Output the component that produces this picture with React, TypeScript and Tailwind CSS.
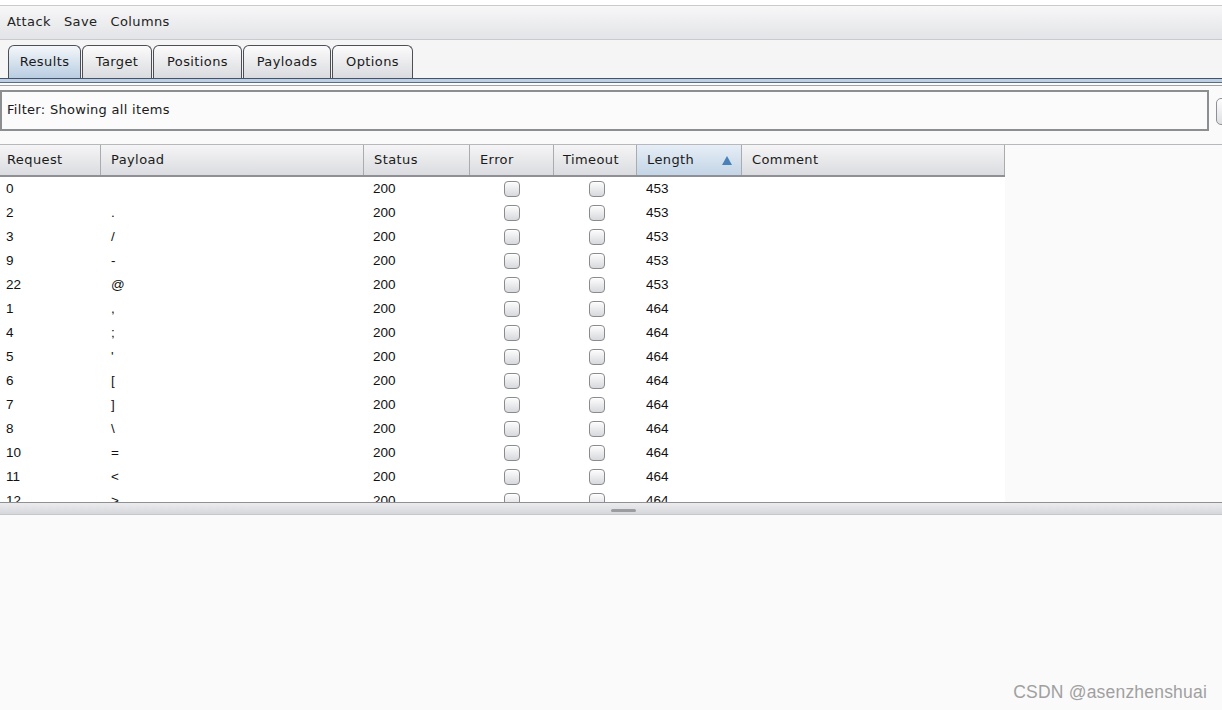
import React from 'react';

const cols = [
  { label: 'Request', w: 101, pad: 'pl-[7px]' },
  { label: 'Payload', w: 263, pad: 'pl-[10px]' },
  { label: 'Status', w: 106, pad: 'pl-[10px]' },
  { label: 'Error', w: 84, pad: 'pl-[10px]' },
  { label: 'Timeout', w: 83, pad: 'pl-[9px]' },
  { label: 'Length', w: 105, pad: 'pl-[10px]' },
  { label: 'Comment', w: 263, pad: 'pl-[10px]' },
];

const rows: [string, string, string][] = [
  ['0', '', '453'],
  ['2', '.', '453'],
  ['3', '/', '453'],
  ['9', '-', '453'],
  ['22', '@', '453'],
  ['1', ',', '464'],
  ['4', ';', '464'],
  ['5', "'", '464'],
  ['6', '[', '464'],
  ['7', ']', '464'],
  ['8', '\\', '464'],
  ['10', '=', '464'],
  ['11', '<', '464'],
  ['12', '>', '464'],
];

const tabs = ['Results', 'Target', 'Positions', 'Payloads', 'Options'];
const tabWidths = ['w-[73px]', 'w-[70px]', 'w-[89px]', 'w-[88px]', 'w-[81px]'];

function Check() {
  return (
    <div className="w-[16px] h-[16px] rounded-[4px] border border-[#8a8b8e] bg-gradient-to-b from-[#fdfdfd] to-[#d8d9dd] shadow-[inset_0_1px_0_#fff]" />
  );
}

export default function App() {
  return (
    <div className="relative h-[710px] w-full overflow-hidden bg-[#fafafa] flex flex-col text-[13px] text-[#111] font-['DejaVu_Sans',sans-serif]">
      {/* top strip */}
      <div className="h-[5px] bg-white" />

      {/* Menu bar */}
      <div className="h-[35px] border-y border-[#c9cacd] bg-gradient-to-b from-[#f7f7f8] to-[#e3e4e7] flex items-center gap-[13px] pl-[7px] pb-[2px] tracking-[0.4px] text-[#222]">
        <span>Attack</span>
        <span>Save</span>
        <span>Columns</span>
      </div>

      {/* Tabs */}
      <div className="h-[38px] flex items-end pl-[8px] gap-[1px] bg-[#f5f5f5]">
        {tabs.map((t, i) => (
          <div
            key={t}
            className={`${tabWidths[i]} h-[33px] rounded-t-[6px] border border-b-0 border-[#4c4f55] flex items-center justify-center tracking-[0.4px] ${
              i === 0
                ? 'bg-gradient-to-b from-[#f4f7fa] to-[#b9cde1] text-[#1a1a1a]'
                : 'bg-gradient-to-b from-[#fbfbfb] to-[#dadbdf] text-[#1a1a1a]'
            }`}
          >
            {t}
          </div>
        ))}
      </div>
      <div className="h-px bg-[#44536a]" />
      <div className="h-[3px] bg-[#bccfe3]" />
      <div className="h-px bg-[#5b6b80]" />
      <div className="h-[2px]" />
      <div className="h-px bg-[#a2a3a6]" />

      {/* Filter */}
      <div className="flex items-start gap-[7px] pt-[4px] overflow-hidden">
        <div className="w-[1209px] shrink-0 h-[41px] border-2 border-[#8d8e90] bg-[#fbfbfb] flex items-center pl-[5px] pb-[2px] tracking-[0.3px] text-[#1a1a1a]">
          Filter: Showing all items
        </div>
        <div className="mt-[8px] w-[20px] h-[27px] rounded-[5px] border border-[#8e9095] bg-gradient-to-b from-[#fdfdfd] to-[#dfe0e3] shrink-0" />
      </div>

      <div className="h-[13px]" />
      <div className="h-px bg-[#b7b8bb]" />

      {/* Table */}
      <div className="w-[1005px] flex flex-col">
        <div className="h-[32px] flex border-b-2 border-[#8e9095]">
          {cols.map((c, i) => (
            <div
              key={c.label}
              style={{ width: c.w }}
              className={`${c.pad} h-full flex items-center justify-between pr-[8px] border-r border-[#a9abaf] tracking-[0.4px] text-[#1a1a1a] ${
                i === 5
                  ? 'bg-gradient-to-b from-[#e6eef6] to-[#c3d5e6]'
                  : 'bg-gradient-to-b from-[#f5f5f6] to-[#dbdce0]'
              }`}
            >
              <span>{c.label}</span>
              {i === 5 && (
                <svg width="10" height="9" viewBox="0 0 10 9" className="mr-[1px]">
                  <path d="M5 0 L10 9 L0 9 Z" fill="#4a80b8" />
                </svg>
              )}
            </div>
          ))}
        </div>

        <div className="h-[325px] overflow-hidden bg-white font-['Liberation_Sans',Arial,sans-serif] text-[13.5px] text-[#111]">
          {rows.map(([req, payload, len]) => (
            <div key={req} className="h-[24px] flex items-center">
              <div className="w-[101px] pl-[6px]">{req}</div>
              <div className="w-[263px] pl-[10px]">{payload}</div>
              <div className="w-[106px] pl-[9px]">200</div>
              <div className="w-[84px] flex justify-center">
                <Check />
              </div>
              <div className="w-[83px] flex justify-center pl-[3px]">
                <Check />
              </div>
              <div className="w-[105px] pl-[9px]">{len}</div>
              <div className="w-[263px]" />
            </div>
          ))}
        </div>
      </div>

      {/* Split divider */}
      <div className="h-px bg-[#8e9095]" />
      <div className="h-[11px] bg-gradient-to-b from-[#ececee] to-[#d6d7db] flex items-end justify-center pb-[2px]">
        <div className="ml-[24px] w-[25px] h-[3px] rounded-[2px] bg-[#9a9ca1]" />
      </div>
      <div className="h-px bg-[#c6c7ca]" />
      <div className="flex-1 bg-[#fafafa]" />

      {/* Watermark */}
      <div className="absolute right-[15px] bottom-[5px] text-[17.5px] tracking-[0.2px] text-[#a0a0a0] font-['Liberation_Sans',Arial,sans-serif]">
        CSDN @asenzhenshuai
      </div>
    </div>
  );
}
